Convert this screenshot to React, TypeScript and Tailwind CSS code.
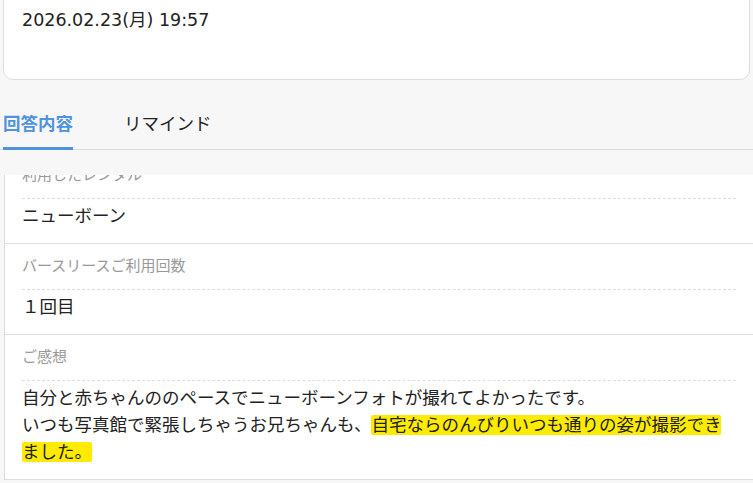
const font = "font-['DejaVu_Sans','Noto_Sans_CJK_JP',sans-serif]";

type Row = { label: string; value: React.ReactNode };

const rows: Row[] = [
  { label: '利用したレンタル', value: 'ニューボーン' },
  { label: 'バースリースご利用回数', value: '１回目' },
  {
    label: 'ご感想',
    value: (
      <>
        自分と赤ちゃんののペースでニューボーンフォトが撮れてよかったです。
        <br />
        いつも写真館で緊張しちゃうお兄ちゃんも、
        <span className="bg-[#ffeb00] [box-decoration-break:clone] rounded-[2px]">
          自宅ならのんびりいつも通りの姿が撮影できました。
        </span>
      </>
    ),
  },
];

const AnswerRow: React.FC<{ row: Row }> = ({ row }) => (
  <div className="border-b border-[#dedede] px-[17px]">
    <div className="border-b border-dashed border-[#dddddd] pt-[11px] pb-[12px] text-[15px] leading-[22px] text-[#999999]">
      {row.label}
    </div>
    <div className="pt-[4px] pb-[13px] text-[17.5px] leading-[27px] text-[#222222]">
      {row.value}
    </div>
  </div>
);

export default function App() {
  return (
    <div className={`flex h-[483px] w-[753px] flex-col overflow-hidden bg-[#f7f7f7] ${font}`}>
      {/* header card, top is scrolled out of view */}
      <div className="mx-[3px] -mt-[10px] h-[90px] shrink-0 rounded-[10px] border border-[#dddddd] bg-white pl-[18px] pt-[17px]">
        <div className="text-[17.5px] leading-[24px] text-[#222222]">2026.02.23(月) 19:57</div>
      </div>

      {/* tabs */}
      <div className="flex shrink-0 border-b border-[#dddddd] pl-[3px]">
        <div className="-mb-px w-[70px] border-b-[3px] border-[#4f93de] pt-[32px] pb-[11px] text-center text-[17.5px] font-bold leading-[24px] text-[#4f93de]">
          回答内容
        </div>
        <div className="-mb-px ml-[51px] border-b-[3px] border-transparent pt-[32px] pb-[11px] text-[17.5px] leading-[24px] text-[#222222]">
          リマインド
        </div>
      </div>

      {/* answers list, scrolled a little under the tabs */}
      <div className="mt-[25px] flex-1 overflow-hidden">
        <div className="-mt-[22px] ml-[4px] border-l border-[#dddddd] bg-white">
          {rows.map((row) => (
            <AnswerRow key={row.label} row={row} />
          ))}
        </div>
      </div>
    </div>
  );
}
